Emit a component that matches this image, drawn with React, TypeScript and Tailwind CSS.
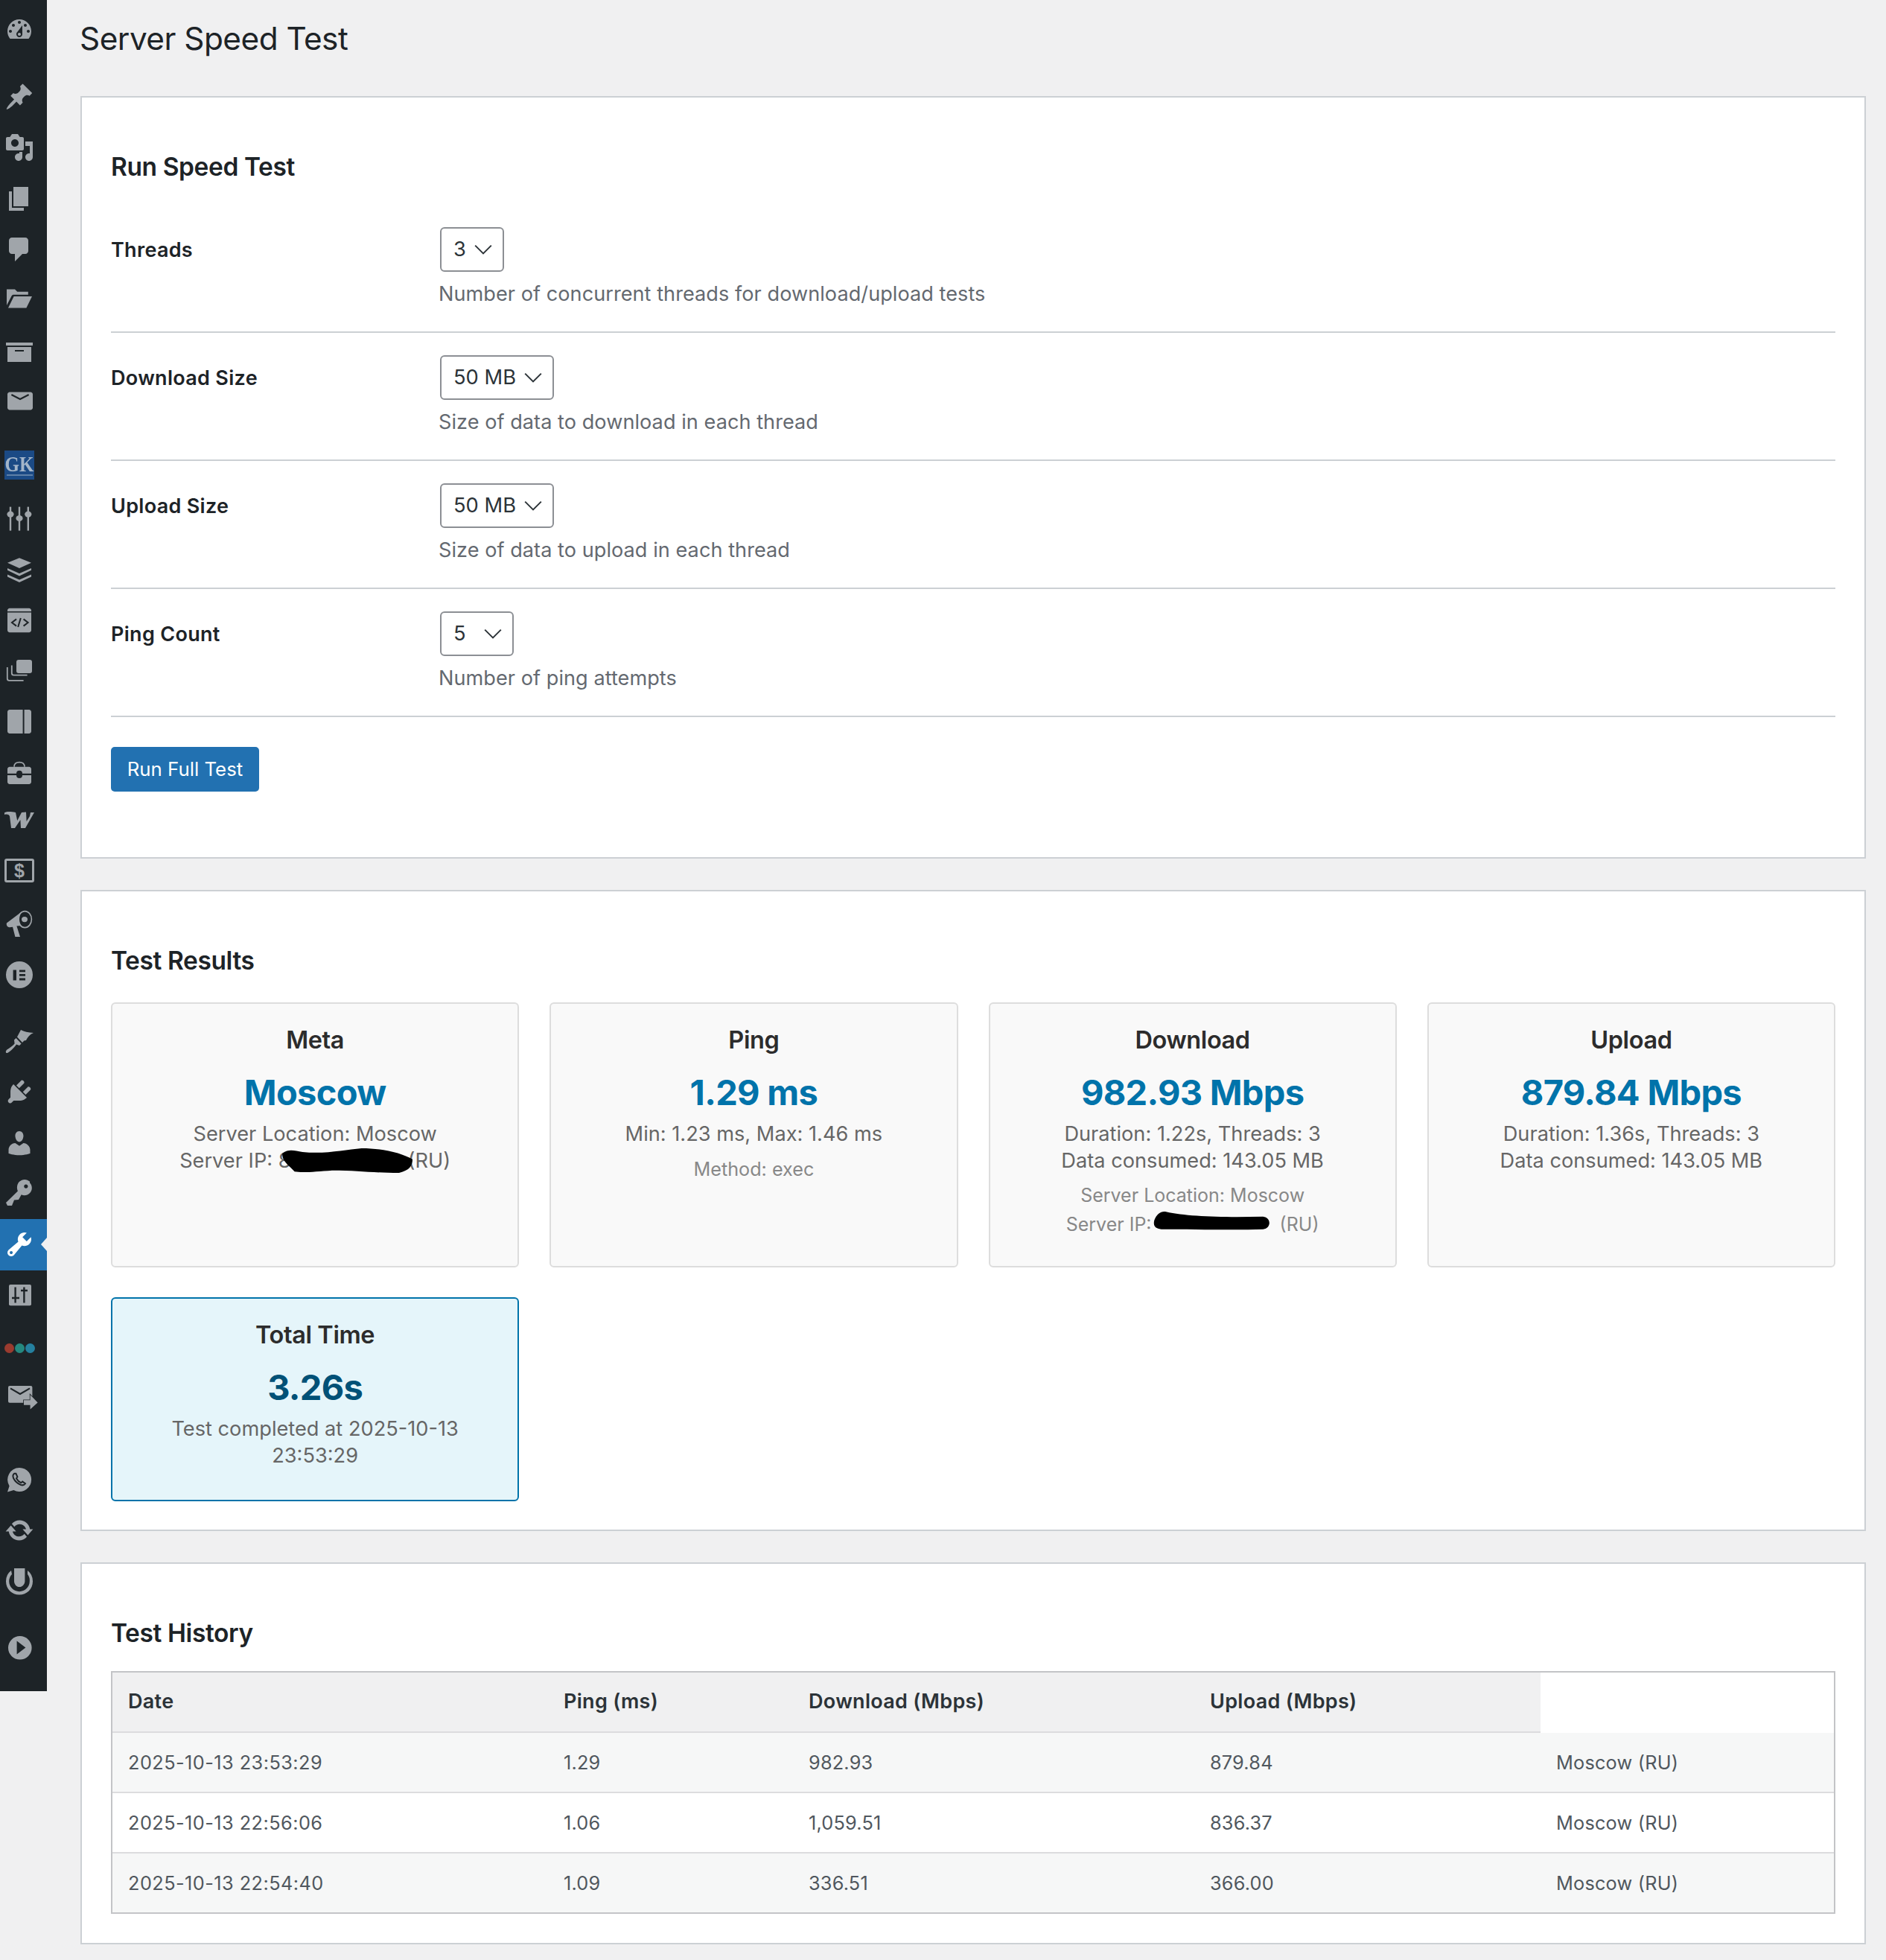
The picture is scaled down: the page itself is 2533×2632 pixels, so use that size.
import { ReactNode } from 'react';

const P = ({ d }: { d: string }) => <path d={d} fillRule="evenodd" />;

// dark strokes that sit on top of the grey icon fill
const Cut = ({ d, w = 0.9 }: { d: string; w?: number }) => (
  <path d={d} fill="none" stroke="#1d2327" strokeWidth={w} />
);

function Ico({ children }: { children: ReactNode }) {
  return (
    <svg viewBox="0 0 20 20" className="h-[40px] w-[40px] overflow-visible fill-[#a0a5aa]">
      {children}
    </svg>
  );
}

const menu: { icon: ReactNode; gap?: string; active?: boolean }[] = [
  { icon: <Ico><P d="M3.760 16h12.480c1.100-1.370 1.760-3.110 1.760-5 0-4.420-3.580-8-8-8s-8 3.580-8 8c0 1.890.66 3.630 1.760 5zM10 4c.55 0 1 .45 1 1s-.45 1-1 1-1-.45-1-1 .45-1 1-1zM6 6c.55 0 1 .45 1 1s-.45 1-1 1-1-.45-1-1 .45-1 1-1zm8 0c.55 0 1 .45 1 1s-.45 1-1 1-1-.45-1-1 .45-1 1-1zm-5.370 5.550L12 7v6c0 1.100-.9 2-2 2s-2-.9-2-2c0-.57.24-1.080.63-1.450zM4 10c.55 0 1 .45 1 1s-.45 1-1 1-1-.45-1-1 .45-1 1-1zm12 0c.55 0 1 .45 1 1s-.45 1-1 1-1-.45-1-1 .45-1 1-1zm-5 3c0-.55-.45-1-1-1s-1 .45-1 1 .45 1 1 1 1-.45 1-1z" /></Ico> },
  { gap: 'mt-[21.6px]', icon: <Ico><P d="M10.440 3.020l1.820-1.820 6.360 6.350-1.830 1.820c-1.050-.68-2.480-.57-3.410.36l-.75.75c-.92.93-1.040 2.350-.35 3.410l-1.830 1.820-2.410-2.410-2.800 2.790c-.42.42-3.380 2.710-3.800 2.290s1.860-3.390 2.280-3.810l2.790-2.790L4.100 9.360l1.830-1.820c1.050.69 2.480.57 3.400-.36l.75-.75c.93-.92 1.050-2.350.36-3.410z" /></Ico> },
  { icon: <Ico><P d="M13 11V4c0-.55-.45-1-1-1h-1.670L9 1H5L3.670 3H2c-.55 0-1 .45-1 1v7c0 .55.45 1 1 1h10c.55 0 1-.45 1-1zM7 4.500c1.380 0 2.500 1.120 2.500 2.500S8.380 9.500 7 9.500 4.500 8.380 4.500 7 5.620 4.500 7 4.500zM14 6h5v10.500c0 1.380-1.120 2.500-2.500 2.500S14 17.880 14 16.500s1.120-2.500 2.500-2.500c.17 0 .34.02.5.05V9h-3V6zm-4 8.050V13h2v3.500c0 1.380-1.120 2.500-2.500 2.500S7 17.880 7 16.500 8.120 14 9.500 14c.17 0 .34.02.5.05z" /></Ico> },
  { icon: <Ico><P d="M6 15V2h10v13H6zm-1 1h8v2H3V5h2v11z" /></Ico> },
  { icon: <Ico><P d="M5 2h9c1.100 0 2 .9 2 2v7c0 1.100-.9 2-2 2h-2l-5 5v-5H5c-1.100 0-2-.9-2-2V4c0-1.100.9-2 2-2z" /></Ico> },
  { icon: <Ico><P d="M1.500 2.200h5.500l1.600 1.700h7.300v2H6.300c-.7 0-1.300.3-1.600 1L1.500 13zM6.300 7H18.500l-3.800 7.800H2.500z" /></Ico> },
  { icon: <Ico><P d="M19 4v2H1V4h18zM2 7h16v10H2V7zm11 3V9H7v1h6z" /></Ico> },
  { icon: <Ico><P d="M3.500 3.300h14c.8 0 1.500.7 1.500 1.500v9c0 .8-.7 1.500-1.500 1.500h-14C2.700 15.300 2 14.600 2 13.800v-9C2 4 2.700 3.300 3.500 3.300z" /><Cut d="M4.700 5l5.800 3 5.800-3" w={1.1} /></Ico> },
  { gap: 'mt-[16.2px]', icon: (
    <div className="flex h-[39px] w-[40px] flex-col items-center justify-center bg-[#1b4a85] font-['Liberation_Serif',serif] text-[25px] leading-[26px] font-bold text-[#a3b5c9]">
      <span className="inline-block scale-y-[1.2]">GK</span>
      <span className="mt-[1px] h-[2px] w-[35px] bg-[#a3b5c9] opacity-50" />
    </div>
  ) },
  { icon: (
    <Ico>
      <rect x="3.400" y="3.800" width="1.200" height="16" />
      <rect x="9.400" y="3.800" width="1.200" height="16" />
      <rect x="15.300" y="3.800" width="1.200" height="16" />
      <ellipse cx="4" cy="8.800" rx="2.300" ry="2" />
      <ellipse cx="10" cy="11.500" rx="2.300" ry="2" />
      <ellipse cx="15.900" cy="8.800" rx="2.300" ry="2" />
    </Ico>
  ) },
  { icon: <Ico><P d="M10 3.600l8 3.300-8 3.600-8-3.600zM2 10.500l8 3.500 8-3.500v1.400l-8 3.800-8-3.800zM2 14.800l8 3.500 8-3.500v1.400L10 20l-8-3.800z" /></Ico> },
  { icon: (
    <Ico>
      <P d="M3.500 3.400h13c.8 0 1.500.7 1.500 1.500v.6H2v-.6c0-.8.7-1.500 1.500-1.500zM2 6.300h16v11.800c0 .8-.7 1.500-1.500 1.500h-13c-.8 0-1.500-.7-1.500-1.500z" />
      <Cut d="M8 10.700l-3 2.300 3 2.300M10.900 10l-1.800 6M12.800 10.700l3 2.300-3 2.300" w={1} />
    </Ico>
  ) },
  { icon: (
    <Ico>
      <rect x="8" y="4" width="10.500" height="9" rx="1.500" />
      <path d="M4.900 7.700v5.300c0 .8.5 1.300 1.300 1.300h9.100" fill="none" stroke="#a0a5aa" strokeWidth="0.9" />
      <path d="M1.900 9v7.600c0 .8.5 1.300 1.300 1.300h9.600" fill="none" stroke="#a0a5aa" strokeWidth="0.9" />
    </Ico>
  ) },
  { icon: <Ico><P d="M3.500 3H12.300v16H3.500C2.700 19 2 18.300 2 17.500v-13C2 3.700 2.700 3 3.500 3zM13.300 3h3.200c.8 0 1.500.7 1.500 1.500v13c0 .8-.7 1.500-1.500 1.500h-3.200z" /></Ico> },
  { icon: (
    <Ico>
      <path d="M6.500 7.400C6.500 5.300 8 4.300 10 4.300s3.500 1 3.500 3.100" fill="none" stroke="#a0a5aa" strokeWidth="0.8" />
      <P d="M3.500 7.400h13c.8 0 1.500.7 1.500 1.500v3h-6a2 2 0 0 0-4 0H2v-3c0-.8.7-1.500 1.500-1.500zM2 13h6a2 2 0 0 0 4 0h6v4.500c0 .8-.7 1.500-1.500 1.500h-13c-.8 0-1.500-.7-1.500-1.500z" />
    </Ico>
  ) },
  { icon: <Ico><P d="M0 3.600C1.500 2.800 4 2.700 7.500 3.500L8.600 9l2.900-5.500 3 -.3.3 6.300L17 6l.5-2.500H20L14 14h-3l-.3-5.500L7 14H4.500L3.500 6C3 4.800 1.500 4.500 0 5z" /></Ico> },
  { icon: (
    <div className="-mt-[6px] flex h-[32px] w-[40px] items-center justify-center rounded-[3px] border-[3px] border-[#a0a5aa] font-['Liberation_Sans',sans-serif] text-[25px] leading-none font-bold text-[#a0a5aa]">$</div>
  ) },
  { icon: (
    <Ico>
      <P d="M1.500 9.800L11.800 2C10.700 3.500 10 5.500 10 7.300c0 1.700.5 3 1.300 4.200l-3.100.2 2.300 7.300H7.200L5.500 12.400l-2 .2C2 12.800 1 11 1.500 9.800z" />
      <ellipse cx="13.700" cy="7.300" rx="4.500" ry="5.500" fill="none" stroke="#a0a5aa" strokeWidth="0.8" />
      <ellipse cx="13.500" cy="7.300" rx="2" ry="1.800" />
    </Ico>
  ) },
  { icon: <Ico><P d="M10 1a9 9 0 1 1 0 18 9 9 0 0 1 0-18zM5.800 6.700v7H8v-7zm4.200 0v1.400h4V6.700zm0 2.800v1.400h4V9.500zm0 2.800v1.400h4v-1.400z" /></Ico> },
  { gap: 'mt-[20.6px]', icon: <Ico><P d="M11 2.500C13 3.600 16 4.400 19.500 4.500 17 5.500 15.500 7.500 14.500 9.500l-1.300.2L12 11 8.500 7.200zM7.800 8l3.500 3.800L10 13l-2-.7C6.500 14.500 3.500 17.500 2 18c-1.400.2-1.400-1.400-.3-2.300 1.800-1 3.800-2.300 5.100-3.900L6.500 9.300z" /></Ico> },
  { icon: <Ico><P d="M13.110 4.360L9.870 7.600 8 5.730l3.240-3.240c.35-.34 1.050-.2 1.560.32.52.51.66 1.210.31 1.550zm-8 1.770l.91-1.120 9.010 9.010-1.190.84c-.71.71-2.630 1.160-3.820 1.160H6.140L4.900 17.260c-.59.59-1.540.59-2.120 0-.59-.58-.59-1.530 0-2.120l1.240-1.240v-3.880c0-1.130.4-3.190 1.090-3.890zm7.260 3.970l3.240-3.240c.34-.35 1.040-.21 1.550.31.52.51.66 1.210.31 1.550l-3.240 3.250z" /></Ico> },
  { icon: <Ico><P d="M10 9.250c-2.270 0-2.730-3.440-2.730-3.440C7 4.020 7.820 2 9.970 2c2.160 0 2.980 2.020 2.710 3.810 0 0-.41 3.440-2.680 3.440zm0 2.570L12.720 10c2.390 0 4.520 2.330 4.520 4.530v2.490s-3.650 1.130-7.240 1.130c-3.650 0-7.240-1.130-7.240-1.130v-2.490c0-2.250 1.940-4.480 4.470-4.480z" /></Ico> },
  { icon: <Ico><P d="M16.950 2.580c1.960 1.950 1.960 5.120 0 7.070-1.510 1.510-3.750 1.840-5.590 1.010l-1.870 3.310-2.990.31L5 18H2l-1-2 7.950-7.690c-.92-2.260-.55-4.770 1.060-6.380 1.950-1.950 5.120-1.950 7.070 0zm-2.510 3.790c.74 0 1.330-.6 1.330-1.340 0-.73-.59-1.330-1.330-1.330-.73 0-1.330.6-1.330 1.330 0 .74.6 1.340 1.330 1.340z" /></Ico> },
  { active: true, icon: (
    <svg viewBox="0 0 20 20" className="h-[40px] w-[40px] fill-white">
      <P d="M16.680 9.770c-1.340 1.340-3.300 1.670-4.950.99l-5.410 6.520c-.99.99-2.590.99-3.580 0s-.99-2.590 0-3.570l6.520-5.420c-.68-1.650-.35-3.610.99-4.950 1.280-1.280 3.120-1.620 4.720-1.060l-2.890 2.890 2.820 2.820 2.860-2.870c.53 1.580.18 3.390-1.080 4.650zM3.810 16.210c.4.39 1.040.39 1.430 0 .4-.4.4-1.040 0-1.430-.39-.4-1.030-.4-1.430 0-.39.39-.39 1.030 0 1.430z" />
    </svg>
  ) },
  { icon: (
    <Ico>
      <rect x="3" y="2.500" width="15" height="14.100" rx="1" />
      <Cut d="M7.300 4.200v10.600M5 11.500h5M13.200 4.200v10.600M11 6.500h4.500" w={1.200} />
    </Ico>
  ) },
  { icon: (
    <div className="mt-[5px] flex items-center gap-[1px] blur-[0.6px]">
      <span className="h-[13px] w-[13px] rounded-full bg-[#9a3b2f]" />
      <span className="h-[13px] w-[13px] rounded-full bg-[#25887f]" />
      <span className="h-[13px] w-[13px] rounded-full bg-[#25809f]" />
    </div>
  ) },
  { icon: (
    <Ico>
      <rect x="2.500" y="2" width="16.200" height="11.400" rx="1" />
      <Cut d="M4 3.700l6.500 3.800 6.500-3.800" w={1.100} />
      <path d="M13 11.600h4.300V8l5 5.300-5 4.500v-2.900H13z" stroke="#1d2327" strokeWidth="0.8" className="[paint-order:stroke]" />
    </Ico>
  ) },
  { gap: 'mt-[41.8px]', icon: (
    <Ico>
      <path d="M10 2a8 8 0 1 1-3.800 15L2 18.200l1.300-4A8 8 0 0 1 10 2z" />
      <Cut d="M6.600 5.900c-1 .8-1.100 2-.5 3.200 1 2 2.700 3.500 4.900 4.400 1.200.4 2.300.1 3-.9l-1.900-1.300-1 .8C9.800 11.500 8.700 10.400 8 9.100l.7-1-1-2.200z" w={1} />
    </Ico>
  ) },
  { icon: <Ico><P d="M10.200 3.280c3.530 0 6.430 2.610 6.920 6h2.080l-3.500 4-3.500-4h2.320c-.45-1.970-2.210-3.450-4.320-3.450-1.450 0-2.730.71-3.540 1.780L4.950 5.660C6.230 4.200 8.110 3.280 10.200 3.280zm-.4 13.440c-3.520 0-6.430-2.610-6.920-6H.8l3.500-4c1.170 1.330 2.330 2.670 3.500 4H5.480c.45 1.970 2.210 3.450 4.320 3.450 1.450 0 2.730-.71 3.540-1.780l1.710 1.950c-1.280 1.460-3.150 2.380-5.250 2.380z" /></Ico> },
  { icon: (
    <svg viewBox="0 0 20 20" className="h-[40px] w-[40px] overflow-visible fill-[#a0a5aa] blur-[0.7px]">
      <P d="M4.500 3A9 9 0 0 0 1 10.300C1 15.500 5 19.300 10 19.300s9-3.800 9-9A9 9 0 0 0 15.500 3v2.500a6.800 6.800 0 0 1 1.400 4.800c0 3.700-3 6.800-6.900 6.800s-6.900-3.100-6.900-6.800a6.800 6.800 0 0 1 1.900-4.800z" />
      <P d="M6.500 1.500h7.200v8.600c0 2.100-1.700 3.900-3.700 3.900s-3.500-1.800-3.500-3.900z" />
    </svg>
  ) },
  { gap: 'mt-[20.8px]', icon: <Ico><P d="M10.400 2a7.900 7.900 0 1 1 0 15.800 7.900 7.900 0 0 1 0-15.800zM8.300 5.300v8.900l5.900-4.400z" /></Ico> },
];

function Sidebar() {
  return (
    <aside className="w-[63px] shrink-0 self-start bg-[#1d2327] pt-[5.8px] pb-[24px]">
      {menu.map((item, i) => (
        <div key={i} className={`relative flex h-[68.4px] items-center pl-[6px] ${item.gap ?? ''} ${item.active ? 'bg-[#2271b1]' : ''}`}>
          {item.icon}
          {item.active && (
            <span className="absolute right-0 top-1/2 h-0 w-0 -translate-y-1/2 border-y-[9px] border-r-[8px] border-y-transparent border-r-[#f0f0f1]" />
          )}
        </div>
      ))}
    </aside>
  );
}

function Panel({ title, children, className }: { title: string; children: ReactNode; className?: string }) {
  return (
    <section className={`border-2 border-[#ccd0d4] bg-white px-[39px] pt-[75px] ${className}`}>
      <h2 className="text-[33.5px] leading-[36px] font-semibold tracking-[-0.4px] text-[#1d2327]">{title}</h2>
      {children}
    </section>
  );
}

function FieldRow({ label, value, options, width, hint }: { label: string; value: string; options: string[]; width: string; hint: string }) {
  return (
    <div className="grid h-[172px] grid-cols-[440px_1fr] border-b-2 border-[#ccd0d4] pt-[30px]">
      <div className="text-[27px] leading-[61px] font-semibold tracking-[0.3px] text-[#1d2327]">{label}</div>
      <div>
        <div className={`relative ml-[2px] h-[60px] ${width}`}>
          <select
            defaultValue={value}
            className="h-full w-full appearance-none rounded-[6px] border-2 border-[#8c8f94] bg-white pl-[16px] text-[27.3px] text-[#2c3338]"
          >
            {options.map(o => <option key={o}>{o}</option>)}
          </select>
          <svg viewBox="0 0 20 20" className="pointer-events-none absolute top-1/2 right-[10px] h-[36px] w-[36px] -translate-y-1/2 fill-none stroke-[#2c3338] stroke-[1.1]">
            <path d="M4 7l6 6 6-6" />
          </svg>
        </div>
        <p className="mt-[11.5px] text-[27.1px] leading-[36px] tracking-[0.05px] text-[#646970]">{hint}</p>
      </div>
    </div>
  );
}

// the black marker strokes that hide the server address
function Scribble({ width, box, d }: { width: string; box: string; d: string }) {
  return (
    <span className={`relative inline-block h-[1px] ${width}`}>
      <svg viewBox="0 0 100 20" preserveAspectRatio="none" className={`absolute fill-black ${box}`}>
        <path d={d} />
      </svg>
    </span>
  );
}

function Card({ title, value, lines, extra, tone }: { title: string; value: string; lines: ReactNode[]; extra?: ReactNode; tone?: 'total' }) {
  const total = tone === 'total';
  return (
    <div className={`rounded-[6px] border-2 px-[20px] pt-[30px] text-center ${total ? 'border-[#0073aa] bg-[#e5f5fa] pb-[41px]' : 'border-[#ddd] bg-[#f9f9f9] pb-[37px]'}`}>
      <h3 className="text-[32.5px] leading-[38px] font-semibold tracking-[-0.4px] text-[#2c2c2c]">{title}</h3>
      <div className={`mt-[21px] text-[47px] leading-[60px] font-bold tracking-[-0.7px] ${total ? 'text-[#005177]' : 'text-[#0073aa]'}`}>{value}</div>
      <div className="mt-[8px] text-[27.2px] leading-[36px] text-[#666]">
        {lines.map((l, i) => <div key={i}>{l}</div>)}
      </div>
      {extra}
    </div>
  );
}

const history = [
  ['2025-10-13 23:53:29', '1.29', '982.93', '879.84', 'Moscow (RU)'],
  ['2025-10-13 22:56:06', '1.06', '1,059.51', '836.37', 'Moscow (RU)'],
  ['2025-10-13 22:54:40', '1.09', '336.51', '366.00', 'Moscow (RU)'],
];

export default function App() {
  return (
    <div className="flex min-h-[2632px] bg-[#f0f0f1] font-['Inter',sans-serif]">
      <Sidebar />
      <main className="min-w-0 flex-1 pr-[27px] pl-[45px]">
        <h1 className="mt-[26px] mb-[51px] -ml-[1px] text-[42.3px] leading-[52px] font-normal tracking-[-0.5px] text-[#1d2327]">Server Speed Test</h1>

        <Panel title="Run Speed Test" className="pb-[88px]">
          <div className="mt-[33px]">
            <FieldRow label="Threads" value="3" options={['1', '2', '3', '4']} width="w-[86px]" hint="Number of concurrent threads for download/upload tests" />
            <FieldRow label="Download Size" value="50 MB" options={['10 MB', '50 MB', '100 MB']} width="w-[153px]" hint="Size of data to download in each thread" />
            <FieldRow label="Upload Size" value="50 MB" options={['10 MB', '50 MB', '100 MB']} width="w-[153px]" hint="Size of data to upload in each thread" />
            <FieldRow label="Ping Count" value="5" options={['3', '5', '10']} width="w-[99px]" hint="Number of ping attempts" />
          </div>
          <button className="mt-[40px] h-[60px] w-[199px] rounded-[5px] bg-[#2271b1] text-[25.8px] text-white">Run Full Test</button>
        </Panel>

        <Panel title="Test Results" className="mt-[42px] pb-[38px]">
          <div className="mt-[38px] grid grid-cols-4 gap-[40px_41px]">
            <Card
              title="Meta"
              value="Moscow"
              lines={[
                'Server Location: Moscow',
                <>
                  Server IP: 8
                  <Scribble
                    width="w-[157px]"
                    box="-top-[25px] -left-[17px] h-[33px] w-[180px]"
                    d="M3 4C8 0 12 2 18 3C35 5 50 1 62 0C78 0 92 4 100 9C100 14 98 18 90 20C70 20 60 18 40 18C28 19 18 20 12 19C8 14 2 10 3 4Z"
                  />
                  (RU)
                </>,
              ]}
            />
            <Card
              title="Ping"
              value="1.29 ms"
              lines={['Min: 1.23 ms, Max: 1.46 ms']}
              extra={<p className="mt-[12px] text-[25.2px] leading-[34px] text-[#888]">Method: exec</p>}
            />
            <Card
              title="Download"
              value="982.93 Mbps"
              lines={['Duration: 1.22s, Threads: 3', 'Data consumed: 143.05 MB']}
              extra={
                <div className="mt-[9px] text-[25px] leading-[38.5px] text-[#888]">
                  <div>Server Location: Moscow</div>
                  <div>
                    Server IP:
                    <Scribble
                      width="w-[165px]"
                      box="-top-[26px] left-0 h-[26px] w-[159px]"
                      d="M2 10C4 3 8 0 12 1C30 6 60 7 94 6C101 7 101 18 94 19C70 20 35 19 8 19C3 18 1 16 2 10Z"
                    />
                    {' '}(RU)
                  </div>
                </div>
              }
            />
            <Card title="Upload" value="879.84 Mbps" lines={['Duration: 1.36s, Threads: 3', 'Data consumed: 143.05 MB']} />
            <Card tone="total" title="Total Time" value="3.26s" lines={['Test completed at 2025-10-13', '23:53:29']} />
          </div>
        </Panel>

        <Panel title="Test History" className="mt-[42px] pb-[39px]">
          <div className="mt-[33px] border-2 border-[#c3c4c7]">
            <table className="w-full table-fixed border-separate border-spacing-0 text-left">
              <colgroup>
                <col className="w-[585px]" />
                <col className="w-[329px]" />
                <col className="w-[539px]" />
                <col className="w-[465px]" />
                <col />
              </colgroup>
              <thead>
                <tr>
                  {['Date', 'Ping (ms)', 'Download (Mbps)', 'Upload (Mbps)'].map(h => (
                    <th key={h} className="h-[81px] border-b-2 border-[#dcdcde] bg-[#f0f0f1] pl-[21px] text-[27px] font-semibold tracking-[0.3px] text-[#2c3338]">{h}</th>
                  ))}
                  <th />
                </tr>
              </thead>
              <tbody>
                {history.map((row, i) => (
                  <tr key={row[0]} className={i % 2 === 0 ? 'bg-[#f6f7f7]' : 'bg-white'}>
                    {row.map((c, j) => (
                      <td key={j} className={`pl-[21px] text-[25.3px] text-[#50575e] ${j === 0 ? 'tracking-[0.45px]' : 'tracking-[0.2px]'} ${i < 2 ? 'h-[81px] border-b-2 border-[#dcdcde]' : 'h-[79px]'}`}>{c}</td>
                    ))}
                  </tr>
                ))}
              </tbody>
            </table>
          </div>
        </Panel>
      </main>
    </div>
  );
}
